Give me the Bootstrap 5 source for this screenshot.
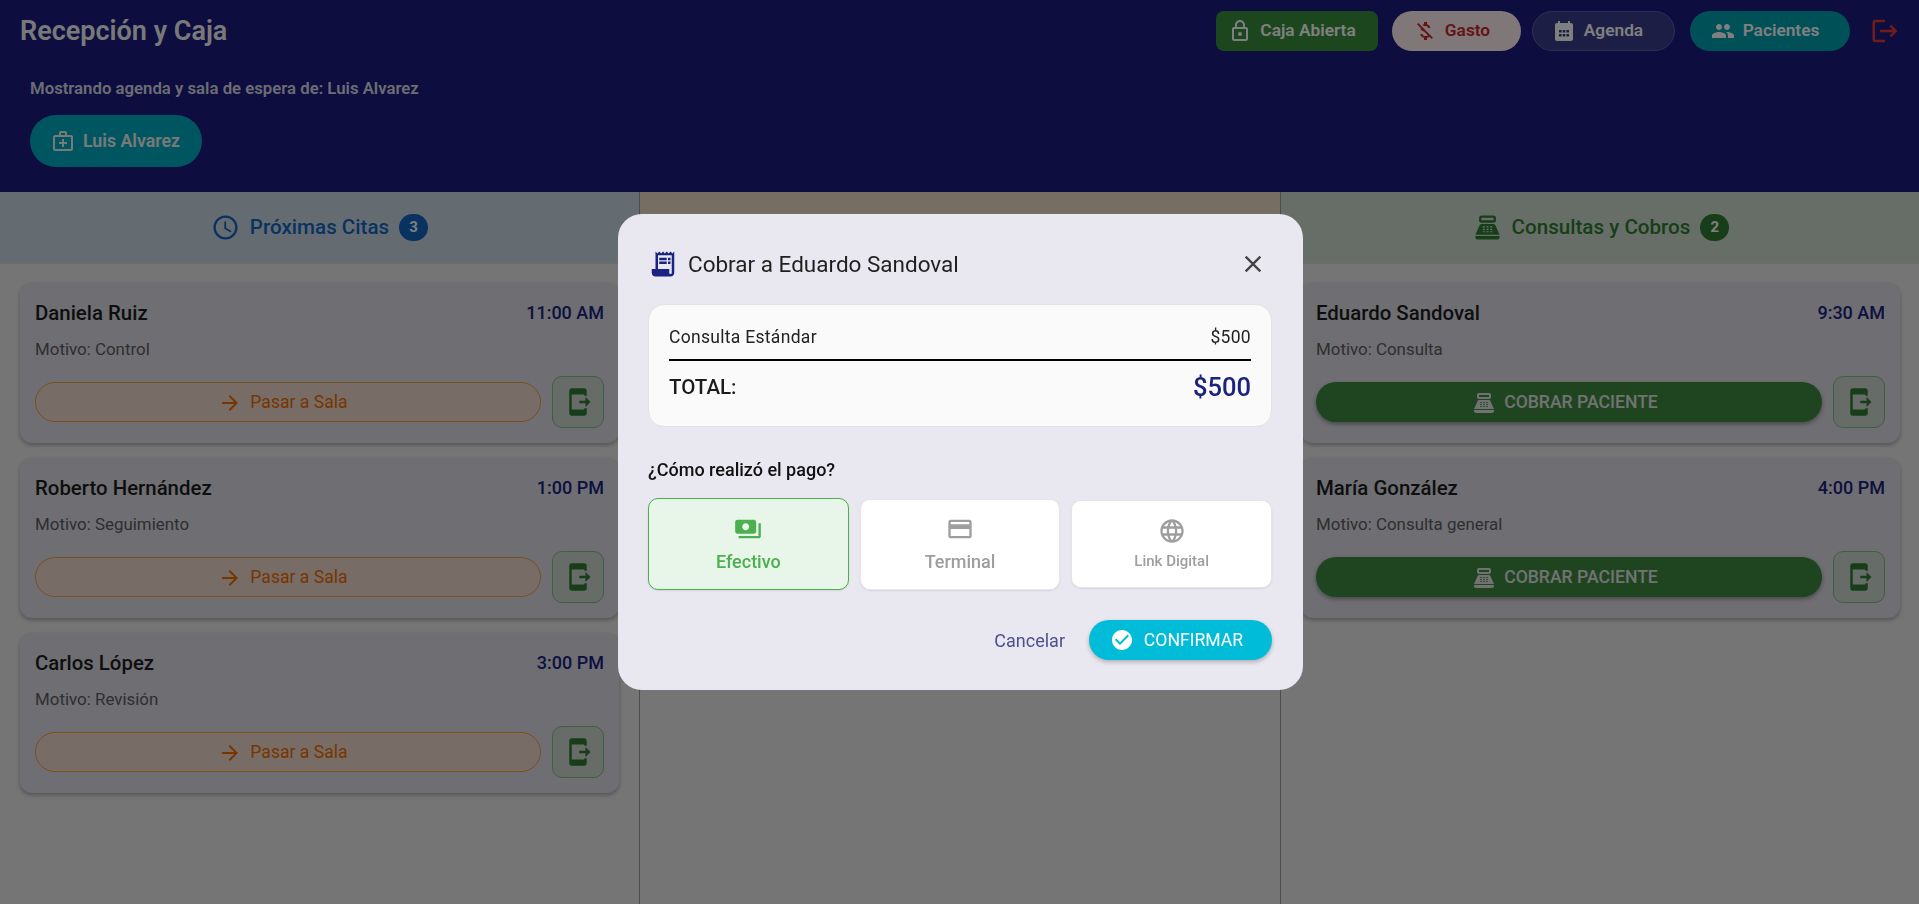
<!DOCTYPE html>
<html lang="es">
<head>
    <meta charset="UTF-8" />
    <title>Recepción y Caja</title>
    <link href="https://cdn.jsdelivr.net/npm/bootstrap@5.3.0/dist/css/bootstrap.min.css" rel="stylesheet" />
    <style>
        html, body { height: 100%; }
        body {
            font-family: Roboto, "Liberation Sans", sans-serif;
            background-color: #ebebeb;
            overflow: hidden;
        }
        .ico { width: 24px; height: 24px; fill: currentColor; flex-shrink: 0; }

        /* cabecera */
        .top-bar { background-color: #1a1b80; color: #fff; height: 192px; padding: 11px 19px 0 20px; }
        .top-title { font-size: 27px; font-weight: 600; line-height: 40px; margin: 0; color: #f2f2f2; }
        .top-btn {
            height: 40px; border: 1px solid transparent; border-radius: 20px; padding: 0 10px 0 0;
            font-size: 17.3px; font-weight: 600; color: #fff; gap: 8px;
        }
        .btn-caja { background-color: #388e3c; border-radius: 8px; width: 162px; }
        .btn-gasto { background-color: #ffeef0; color: #c62828; width: 129px; margin: 0 -5px 0 -2px; }
        .btn-agenda { background-color: #3a3c8c; border-color: #5c5ea0; width: 143px; padding-right: 12px; margin-right: -1px; }
        .btn-pacientes { background-color: #00a0b0; width: 160px; }
        .logout-ico { color: #e53935; width: 30px; height: 30px; }
        .doctor-box { padding: 26px 0 0 10px; }
        .doctor-txt { font-size: 16.75px; font-weight: 600; color: #d8d8e4; line-height: 22px; margin-bottom: 16px; }
        .doctor-pill {
            height: 52px; width: 172px; border-radius: 26px; background-color: #00acc1; color: #f2f2f2;
            font-size: 17.8px; font-weight: 600; gap: 8px; padding-left: 21px;
        }

        /* columnas */
        .board { height: 712px; }
        .col-first { width: 639px; }
        .board-mid { width: 642px; border-left: 1px solid #9a9a9a; border-right: 1px solid #9a9a9a; }
        .col-head {
            height: 72px; border-bottom: 2px solid #d8d8d8; gap: 10px; font-size: 20.6px; font-weight: 500;
        }
        .col-head .ico { width: 29px; height: 29px; }
        .head-blue { background-color: #c9d9e4; color: #1565c0; }
        .head-orange { background-color: #ecdcc4; color: #ef6c00; }
        .head-green { background-color: #cfdccf; color: #2e7d32; padding-left: 2px; }
        .count-blue, .count-green {
            min-width: 29px; height: 27px; border-radius: 14px; color: #fff; font-size: 15px; font-weight: 700;
            display: flex; align-items: center; justify-content: center;
        }
        .count-blue { background-color: #1565c0; }
        .count-green { background-color: #2e7d32; }
        .col-body { padding: 19px 20px; gap: 15px; }
        .col-body-right { padding: 19px 19px 19px 20px; }
        .cita-card {
            height: 160px; background-color: #dcdce6; border-radius: 12px; padding: 16px 15px 0 15px;
            box-shadow: 0 2px 4px rgba(0,0,0,.3);
        }
        .cita-name { font-size: 20.4px; font-weight: 500; color: #1c1c1c; line-height: 28px; }
        .cita-time { font-size: 18px; font-weight: 500; color: #1a237e; line-height: 28px; }
        .cita-why { font-size: 16.9px; color: #5e5e5e; line-height: 24px; margin-top: 10px; height: 30px; }
        .cita-actions { margin-top: 9px; gap: 11px; }
        .pass-btn {
            height: 40px; border-radius: 20px; border: 1px solid #f0a040; background-color: #eedacc;
            color: #ef6c00; font-size: 17.6px; gap: 8px; padding: 1px 10px 0 0;
        }
        .pay-btn {
            height: 40px; border-radius: 20px; background-color: #3d8b40; color: #e4e4e4; font-size: 17.6px;
            font-weight: 500; gap: 8px; padding: 1px 8px 0 0; box-shadow: 0 2px 4px rgba(0,0,0,.35);
        }
        .exit-btn {
            width: 52px; height: 52px; border-radius: 10px; border: 1px solid #7fbf82; background-color: #ced8d0;
            color: #2e7d32; padding: 0;
        }
        .exit-btn .ico { width: 30px; height: 30px; }

        /* ventana de cobro */
        .pay-modal { padding-left: 1px; }
        .pay-dialog { max-width: 685px; margin: 214px auto 0; }
        .pay-box { background-color: #e9e7ef; border: 0; border-radius: 24px; padding: 30px 30.5px; height: 476px; }
        .pay-title { font-size: 22.5px; font-weight: 400; color: #1f1f1f; gap: 10px; line-height: 38px; margin: 1px 0 0; }
        .pay-title .ico { color: #1a237e; width: 30px; height: 30px; }
        .pay-close { background: none; border: 0; padding: 0; color: #444; margin: 1px 5px 0 0; }
        .pay-close .ico { width: 28px; height: 28px; }
        .sum-box {
            background-color: #fafafa; border: 1px solid #e2e2e6; border-radius: 16px; height: 124px; margin-top: 21px;
            padding: 20px 20px 0;
        }
        .sum-row {
            font-size: 17.5px; letter-spacing: .3px; color: #222; line-height: 24px; padding-bottom: 10px;
            border-bottom: 2px solid #000;
        }
        .sum-total { padding-top: 7px; align-items: center; }
        .sum-total span:first-child { font-size: 20.5px; font-weight: 500; color: #1c1c1c; }
        .sum-total span:last-child { font-size: 25.5px; font-weight: 500; color: #1a237e; }
        .pay-q { font-size: 18px; font-weight: 500; color: #111; margin-top: 31px; line-height: 24px; }
        .opt-row { margin-top: 16px; gap: 11px; height: 92px; align-items: center; }
        .opt-tile {
            flex: 1 1 0; background-color: #fff; border: 1px solid #e6e6e6; border-radius: 10px; color: #9e9e9e;
            font-weight: 500; gap: 5px; padding-top: 1px; box-shadow: 0 1px 2px rgba(0,0,0,.08);
        }
        .opt-cash { height: 92px; background-color: #e8f5e9; border-color: #4caf50; color: #4caf50; font-size: 18px; }
        .opt-term { height: 91px; font-size: 18px; }
        .opt-link { height: 88px; font-size: 15px; }
        .opt-tile .ico { width: 28px; height: 28px; }
        .pay-foot { margin-top: 30px; gap: 24px; }
        .cancel-btn { background: none; border: 0; padding: 0; color: #4f4f8f; font-size: 18px; }
        .confirm-btn {
            width: 183px; height: 40px; border-radius: 20px; border: 0; background-color: #00bcd9; color: #fff;
            font-size: 17.6px; font-weight: 400; gap: 10px; padding: 0 8px 0 0; box-shadow: 0 2px 4px rgba(0,0,0,.25);
        }
    </style>
</head>
<body>
<svg class="d-none">
    <symbol id="i-lock" viewBox="0 0 24 24"><path d="M18 8h-1V6c0-2.76-2.24-5-5-5S7 3.24 7 6v2H6c-1.1 0-2 .9-2 2v10c0 1.1.9 2 2 2h12c1.1 0 2-.9 2-2V10c0-1.1-.9-2-2-2zM9 6c0-1.66 1.34-3 3-3s3 1.34 3 3v2H9V6zm9 14H6V10h12v10zm-6-3c1.1 0 2-.9 2-2s-.9-2-2-2-2 .9-2 2 .9 2 2 2z"/></symbol>
    <symbol id="i-off" viewBox="0 0 24 24"><path d="M12.5 6.9c1.78 0 2.44.85 2.5 2.1h2.21c-.07-1.72-1.12-3.3-3.21-3.81V3h-3v2.16c-.53.12-1.03.3-1.48.54l1.47 1.47c.41-.17.91-.27 1.51-.27zM5.33 4.06 4.06 5.33 7.5 8.77c0 2.08 1.56 3.21 3.91 3.91l3.51 3.51c-.34.48-1.05.91-2.42.91-2.06 0-2.87-.92-2.98-2.1h-2.2c.12 2.19 1.76 3.42 3.68 3.83V21h3v-2.15c.96-.18 1.82-.55 2.45-1.12l2.22 2.22 1.27-1.27L5.33 4.06z"/></symbol>
    <symbol id="i-cal" viewBox="0 0 24 24"><path fill-rule="evenodd" d="M19 4h-1V2h-2v2H8V2H6v2H5c-1.1 0-2 .9-2 2v14c0 1.1.9 2 2 2h14c1.1 0 2-.9 2-2V6c0-1.1-.9-2-2-2zM7 11v2.5h2.6V11H7zm3.7 0v2.5h2.6V11h-2.6zm3.7 0v2.5H17V11h-2.6zM7 15v2.5h2.6V15H7zm3.7 0v2.5h2.6V15h-2.6zm3.7 0v2.5H17V15h-2.6z"/></symbol>
    <symbol id="i-people" viewBox="0 0 24 24"><path d="M16 11c1.66 0 2.99-1.34 2.99-3S17.66 5 16 5c-1.66 0-3 1.34-3 3s1.34 3 3 3zm-8 0c1.66 0 2.99-1.34 2.99-3S9.66 5 8 5C6.34 5 5 6.34 5 8s1.34 3 3 3zm0 2c-2.33 0-7 1.17-7 3.5V19h14v-2.5c0-2.33-4.67-3.5-7-3.5zm8 0c-.29 0-.62.02-.97.05 1.16.84 1.97 1.97 1.97 3.45V19h6v-2.5c0-2.33-4.67-3.5-7-3.5z"/></symbol>
    <symbol id="i-logout" viewBox="0 0 24 24"><path d="M17 7l-1.41 1.41L18.17 11H8v2h10.17l-2.58 2.58L17 17l5-5zM4 5h8V3H4c-1.1 0-2 .9-2 2v14c0 1.1.9 2 2 2h8v-2H4V5z"/></symbol>
    <symbol id="i-med" viewBox="0 0 24 24"><path d="M20 6h-4V4c0-1.1-.9-2-2-2h-4c-1.1 0-2 .9-2 2v2H4c-1.1 0-2 .9-2 2v12c0 1.1.9 2 2 2h16c1.1 0 2-.9 2-2V8c0-1.1-.9-2-2-2zM10 4h4v2h-4V4zm10 16H4V8h16v12zM13 10h-2v3H8v2h3v3h2v-3h3v-2h-3z"/></symbol>
    <symbol id="i-clock" viewBox="0 0 24 24"><path d="M11.99 2C6.47 2 2 6.48 2 12s4.47 10 9.99 10C17.52 22 22 17.52 22 12S17.52 2 11.99 2zM12 20c-4.42 0-8-3.58-8-8s3.58-8 8-8 8 3.58 8 8-3.58 8-8 8zm.5-13H11v6l5.25 3.15.75-1.23-4.5-2.67z"/></symbol>
    <symbol id="i-pos" viewBox="0 0 24 24"><path d="M17 2H7c-1.1 0-2 .9-2 2v2c0 1.1.9 2 2 2h10c1.1 0 2-.9 2-2V4c0-1.1-.9-2-2-2zm0 4H7V4h10v2zm3 16H4c-1.1 0-2-.9-2-2v-1h20v1c0 1.1-.9 2-2 2zm-1.47-11.81C18.21 9.47 17.49 9 16.7 9H7.3c-.79 0-1.51.47-1.83 1.19L2 18h20l-3.47-7.81zM9.5 16h-1c-.28 0-.5-.22-.5-.5s.22-.5.5-.5h1c.28 0 .5.22.5.5s-.22.5-.5.5zm0-2h-1c-.28 0-.5-.22-.5-.5s.22-.5.5-.5h1c.28 0 .5.22.5.5s-.22.5-.5.5zm0-2h-1c-.28 0-.5-.22-.5-.5s.22-.5.5-.5h1c.28 0 .5.22.5.5s-.22.5-.5.5zm3 4h-1c-.28 0-.5-.22-.5-.5s.22-.5.5-.5h1c.28 0 .5.22.5.5s-.22.5-.5.5zm0-2h-1c-.28 0-.5-.22-.5-.5s.22-.5.5-.5h1c.28 0 .5.22.5.5s-.22.5-.5.5zm0-2h-1c-.28 0-.5-.22-.5-.5s.22-.5.5-.5h1c.28 0 .5.22.5.5s-.22.5-.5.5zm3 4h-1c-.28 0-.5-.22-.5-.5s.22-.5.5-.5h1c.28 0 .5.22.5.5s-.22.5-.5.5zm0-2h-1c-.28 0-.5-.22-.5-.5s.22-.5.5-.5h1c.28 0 .5.22.5.5s-.22.5-.5.5zm0-2h-1c-.28 0-.5-.22-.5-.5s.22-.5.5-.5h1c.28 0 .5.22.5.5s-.22.5-.5.5z"/></symbol>
    <symbol id="i-arrow" viewBox="0 0 24 24"><path d="M12 4l-1.41 1.41L16.17 11H4v2h12.17l-5.58 5.59L12 20l8-8z"/></symbol>
    <symbol id="i-exit" viewBox="0 0 24 24"><path d="M17 17h2v4c0 1.1-.9 2-2 2H7c-1.1 0-2-.9-2-2V3c0-1.1.9-1.99 2-1.99L17 1c1.1 0 2 .9 2 2v4h-2V6H7v12h10v-1zm5-5-4-4v3h-5v2h5v3l4-4z"/></symbol>
    <symbol id="i-receipt" viewBox="0 0 24 24"><path d="M19.5 3.5 18 2l-1.5 1.5L15 2l-1.5 1.5L12 2l-1.5 1.5L9 2 7.5 3.5 6 2v14H3v3c0 1.66 1.34 3 3 3h12c1.66 0 3-1.34 3-3V2l-1.5 1.5zM19 19c0 .55-.45 1-1 1s-1-.45-1-1v-3H8V5h11v14zM9 7h6v2H9zm7 0h2v2h-2zM9 10h6v2H9zm7 0h2v2h-2z"/></symbol>
    <symbol id="i-close" viewBox="0 0 24 24"><path d="M19 6.41 17.59 5 12 10.59 6.41 5 5 6.41 10.59 12 5 17.59 6.41 19 12 13.41 17.59 19 19 17.59 13.41 12z"/></symbol>
    <symbol id="i-cash" viewBox="0 0 24 24"><path d="M19 14V6c0-1.1-.9-2-2-2H3c-1.1 0-2 .9-2 2v8c0 1.1.9 2 2 2h14c1.1 0 2-.9 2-2zm-9-1c-1.66 0-3-1.34-3-3s1.34-3 3-3 3 1.34 3 3-1.34 3-3 3zm13-6v11c0 1.1-.9 2-2 2H4v-2h17V7h2z"/></symbol>
    <symbol id="i-card" viewBox="0 0 24 24"><path d="M20 4H4c-1.11 0-1.99.89-1.99 2L2 18c0 1.11.89 2 2 2h16c1.11 0 2-.89 2-2V6c0-1.11-.89-2-2-2zm0 14H4v-6h16v6zm0-10H4V6h16v2z"/></symbol>
    <symbol id="i-web" viewBox="0 0 24 24"><path d="M11.99 2C6.47 2 2 6.48 2 12s4.47 10 9.99 10C17.52 22 22 17.52 22 12S17.52 2 11.99 2zm6.93 6h-2.95c-.32-1.25-.78-2.45-1.38-3.56 1.84.63 3.37 1.91 4.33 3.56zM12 4.04c.83 1.2 1.48 2.53 1.91 3.96h-3.82c.43-1.43 1.08-2.76 1.91-3.96zM4.26 14C4.1 13.36 4 12.69 4 12s.1-1.36.26-2h3.38c-.08.66-.14 1.32-.14 2 0 .68.06 1.34.14 2H4.26zm.82 2h2.95c.32 1.25.78 2.45 1.38 3.56-1.84-.63-3.37-1.9-4.33-3.56zm2.95-8H5.08c.96-1.66 2.49-2.93 4.33-3.56C8.81 5.55 8.35 6.75 8.03 8zM12 19.96c-.83-1.2-1.48-2.53-1.91-3.96h3.82c-.43 1.43-1.08 2.76-1.91 3.96zM14.34 14H9.66c-.09-.66-.16-1.32-.16-2 0-.68.07-1.35.16-2h4.68c.09.65.16 1.32.16 2 0 .68-.07 1.34-.16 2zm.25 5.56c.6-1.11 1.06-2.31 1.38-3.56h2.95c-.96 1.65-2.49 2.93-4.33 3.56zM16.36 14c.08-.66.14-1.32.14-2 0-.68-.06-1.34-.14-2h3.38c.16.64.26 1.31.26 2s-.1 1.36-.26 2h-3.38z"/></symbol>
    <symbol id="i-check" viewBox="0 0 24 24"><path d="M12 2C6.48 2 2 6.48 2 12s4.48 10 10 10 10-4.48 10-10S17.52 2 12 2zm-2 15-5-5 1.41-1.41L10 14.17l7.59-7.59L19 8l-9 9z"/></symbol>
</svg>

<header class="top-bar">
    <div class="d-flex justify-content-between align-items-center">
        <h1 class="top-title">Recepción y Caja</h1>
        <div class="d-flex align-items-center gap-3">
            <button class="btn top-btn btn-caja d-flex align-items-center justify-content-center"><svg class="ico"><use href="#i-lock"/></svg>Caja Abierta</button>
            <button class="btn top-btn btn-gasto d-flex align-items-center justify-content-center"><svg class="ico"><use href="#i-off"/></svg>Gasto</button>
            <button class="btn top-btn btn-agenda d-flex align-items-center justify-content-center"><svg class="ico"><use href="#i-cal"/></svg>Agenda</button>
            <button class="btn top-btn btn-pacientes d-flex align-items-center justify-content-center"><svg class="ico"><use href="#i-people"/></svg>Pacientes</button>
            <svg class="ico logout-ico ms-1"><use href="#i-logout"/></svg>
        </div>
    </div>
    <div class="doctor-box">
        <div class="doctor-txt">Mostrando agenda y sala de espera de: Luis Alvarez</div>
        <div class="doctor-pill d-flex align-items-center"><svg class="ico"><use href="#i-med"/></svg>Luis Alvarez</div>
    </div>
</header>

<main class="board d-flex">
    <section class="col-first">
        <div class="col-head head-blue d-flex align-items-center justify-content-center">
            <svg class="ico"><use href="#i-clock"/></svg>Próximas Citas<span class="count-blue">3</span>
        </div>
        <div class="col-body d-flex flex-column">
            <div class="cita-card">
                <div class="d-flex justify-content-between"><span class="cita-name">Daniela Ruiz</span><span class="cita-time">11:00 AM</span></div>
                <div class="cita-why">Motivo: Control</div>
                <div class="cita-actions d-flex align-items-center">
                    <button class="btn pass-btn flex-grow-1 d-flex align-items-center justify-content-center"><svg class="ico"><use href="#i-arrow"/></svg>Pasar a Sala</button>
                    <button class="btn exit-btn d-flex align-items-center justify-content-center"><svg class="ico"><use href="#i-exit"/></svg></button>
                </div>
            </div>
            <div class="cita-card">
                <div class="d-flex justify-content-between"><span class="cita-name">Roberto Hernández</span><span class="cita-time">1:00 PM</span></div>
                <div class="cita-why">Motivo: Seguimiento</div>
                <div class="cita-actions d-flex align-items-center">
                    <button class="btn pass-btn flex-grow-1 d-flex align-items-center justify-content-center"><svg class="ico"><use href="#i-arrow"/></svg>Pasar a Sala</button>
                    <button class="btn exit-btn d-flex align-items-center justify-content-center"><svg class="ico"><use href="#i-exit"/></svg></button>
                </div>
            </div>
            <div class="cita-card">
                <div class="d-flex justify-content-between"><span class="cita-name">Carlos López</span><span class="cita-time">3:00 PM</span></div>
                <div class="cita-why">Motivo: Revisión</div>
                <div class="cita-actions d-flex align-items-center">
                    <button class="btn pass-btn flex-grow-1 d-flex align-items-center justify-content-center"><svg class="ico"><use href="#i-arrow"/></svg>Pasar a Sala</button>
                    <button class="btn exit-btn d-flex align-items-center justify-content-center"><svg class="ico"><use href="#i-exit"/></svg></button>
                </div>
            </div>
        </div>
    </section>

    <section class="board-mid">
        <div class="col-head head-orange"></div>
    </section>

    <section class="flex-grow-1">
        <div class="col-head head-green d-flex align-items-center justify-content-center">
            <svg class="ico"><use href="#i-pos"/></svg>Consultas y Cobros<span class="count-green">2</span>
        </div>
        <div class="col-body col-body-right d-flex flex-column">
            <div class="cita-card">
                <div class="d-flex justify-content-between"><span class="cita-name">Eduardo Sandoval</span><span class="cita-time">9:30 AM</span></div>
                <div class="cita-why">Motivo: Consulta</div>
                <div class="cita-actions d-flex align-items-center">
                    <button class="btn pay-btn flex-grow-1 d-flex align-items-center justify-content-center"><svg class="ico"><use href="#i-pos"/></svg>COBRAR PACIENTE</button>
                    <button class="btn exit-btn d-flex align-items-center justify-content-center"><svg class="ico"><use href="#i-exit"/></svg></button>
                </div>
            </div>
            <div class="cita-card">
                <div class="d-flex justify-content-between"><span class="cita-name">María González</span><span class="cita-time">4:00 PM</span></div>
                <div class="cita-why">Motivo: Consulta general</div>
                <div class="cita-actions d-flex align-items-center">
                    <button class="btn pay-btn flex-grow-1 d-flex align-items-center justify-content-center"><svg class="ico"><use href="#i-pos"/></svg>COBRAR PACIENTE</button>
                    <button class="btn exit-btn d-flex align-items-center justify-content-center"><svg class="ico"><use href="#i-exit"/></svg></button>
                </div>
            </div>
        </div>
    </section>
</main>

<div class="modal-backdrop show"></div>
<div class="modal d-block pay-modal">
    <div class="modal-dialog pay-dialog">
        <div class="modal-content pay-box">
            <div class="d-flex justify-content-between align-items-center">
                <h5 class="pay-title d-flex align-items-center"><svg class="ico"><use href="#i-receipt"/></svg>Cobrar a Eduardo Sandoval</h5>
                <button class="pay-close d-flex"><svg class="ico"><use href="#i-close"/></svg></button>
            </div>
            <div class="sum-box">
                <div class="sum-row d-flex justify-content-between"><span>Consulta Estándar</span><span>$500</span></div>
                <div class="sum-total d-flex justify-content-between"><span>TOTAL:</span><span>$500</span></div>
            </div>
            <div class="pay-q">¿Cómo realizó el pago?</div>
            <div class="opt-row d-flex">
                <div class="opt-tile opt-cash d-flex flex-column align-items-center justify-content-center"><svg class="ico"><use href="#i-cash"/></svg>Efectivo</div>
                <div class="opt-tile opt-term d-flex flex-column align-items-center justify-content-center"><svg class="ico"><use href="#i-card"/></svg>Terminal</div>
                <div class="opt-tile opt-link d-flex flex-column align-items-center justify-content-center"><svg class="ico"><use href="#i-web"/></svg>Link Digital</div>
            </div>
            <div class="pay-foot d-flex justify-content-end align-items-center">
                <button class="cancel-btn">Cancelar</button>
                <button class="confirm-btn d-flex align-items-center justify-content-center"><svg class="ico"><use href="#i-check"/></svg>CONFIRMAR</button>
            </div>
        </div>
    </div>
</div>
<script src="https://cdn.jsdelivr.net/npm/bootstrap@5.3.0/dist/js/bootstrap.bundle.min.js"></script>
</body>
</html>
